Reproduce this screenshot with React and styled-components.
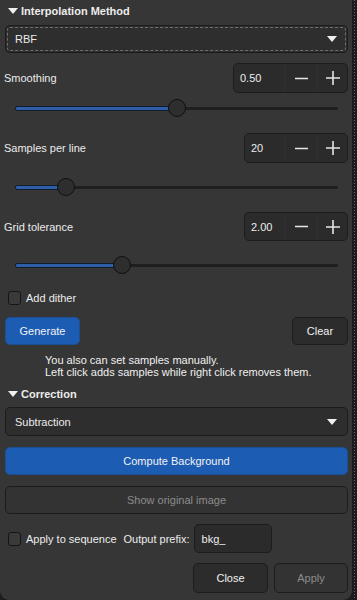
import styled, { createGlobalStyle } from "styled-components";

const Global = createGlobalStyle`
  html, body {
    margin: 0;
    padding: 0;
    background: #1c1c1c;
  }
  body {
    font-family: "Liberation Sans", Arial, sans-serif;
    font-size: 11px;
    color: #ececec;
  }
`;

const Page = styled.div`
  display: flex;
  width: 357px;
  height: 600px;
  overflow: hidden;
`;

const Panel = styled.div`
  width: 352px;
  height: 600px;
  box-sizing: border-box;
  padding: 3px 4px 0 5px;
  background: #363636;
  border-radius: 0 0 9px 9px;
  display: flex;
  flex-direction: column;
`;

/* dotted strip on the right edge */
const Edge = styled.div`
  width: 5px;
  height: 600px;
  background: repeating-linear-gradient(
    to bottom,
    #6a6a6a 0px,
    #6a6a6a 1px,
    #1c1c1c 1px,
    #1c1c1c 3px
  );
  background-size: 1px 100%;
  background-repeat: no-repeat;
  background-position: 2px 0;
`;

const Header = styled.div`
  display: flex;
  align-items: center;
  gap: 3px;
  height: 16px;
  padding-left: 3px;
  margin-top: ${(p) => p.$mt || 0}px;
  font-weight: bold;
  font-size: 11px;
`;

const Caret = styled.span`
  width: 0;
  height: 0;
  border-left: 5px solid transparent;
  border-right: 5px solid transparent;
  border-top: 6px solid #f0f0f0;
`;

const Combo = styled.div`
  display: flex;
  align-items: center;
  justify-content: space-between;
  height: ${(p) => p.$h || 28}px;
  margin-top: ${(p) => p.$mt || 0}px;
  box-sizing: border-box;
  padding: 0 10px 0 9px;
  background: #2e2e2e;
  border: 1px solid #1b1b1b;
  border-radius: 5px;
  outline: ${(p) => (p.$focus ? "1px dashed #6e6e6e" : "none")};
  outline-offset: -3px;
`;

const Row = styled.div`
  display: flex;
  align-items: center;
  justify-content: ${(p) => p.$justify || "space-between"};
  gap: ${(p) => p.$gap || 0}px;
  margin-top: ${(p) => p.$mt || 0}px;
  height: ${(p) => p.$h || 30}px;
`;

const Label = styled.span`
  margin-left: ${(p) => p.$ml ?? -1}px;
  color: #ececec;
`;

const Spin = styled.div`
  display: flex;
  height: 100%;
  box-sizing: border-box;
  background: #2b2b2b;
  border: 1px solid #1c1c1c;
  border-radius: 5px;
  overflow: hidden;
`;

const SpinEntry = styled.div`
  width: ${(p) => p.$w}px;
  display: flex;
  align-items: center;
  padding-left: 6px;
  box-sizing: border-box;
`;

const SpinBtn = styled.div`
  width: ${(p) => p.$w || 31}px;
  box-sizing: border-box;
  display: flex;
  align-items: center;
  justify-content: center;
  border-left: 1px solid #303030;
`;

const SliderWrap = styled.div`
  position: relative;
  height: 20px;
  margin: ${(p) => p.$mt}px 10px 0 10px;
`;

const Track = styled.div`
  position: absolute;
  left: 0;
  right: 0;
  top: 9px;
  height: 3px;
  border-radius: 2px;
  background: #1f1f1f;
`;

const Fill = styled.div`
  position: absolute;
  left: 0;
  top: 8px;
  height: 5px;
  box-sizing: border-box;
  border-radius: 2px;
  background: #2f5ea8;
  border: 1px solid #121c2c;
`;

const Knob = styled.div`
  position: absolute;
  top: 1px;
  width: 18px;
  height: 18px;
  margin-left: -9px;
  box-sizing: border-box;
  border-radius: 50%;
  background: #2e2e2e;
  border: 1px solid #0f0f0f;
`;

const CheckRow = styled.label`
  display: flex;
  align-items: center;
  gap: 5px;
  padding-left: 3px;
  margin-top: ${(p) => p.$mt || 0}px;
  height: ${(p) => p.$h || 16}px;
`;

const Box = styled.span`
  width: 13px;
  height: 14px;
  box-sizing: border-box;
  border: 1px solid #151515;
  border-radius: 3px;
  background: #3a3a3a;
`;

const Button = styled.div`
  display: flex;
  align-items: center;
  justify-content: center;
  box-sizing: border-box;
  width: ${(p) => (p.$w ? `${p.$w}px` : "auto")};
  height: ${(p) => p.$h || 28}px;
  margin-top: ${(p) => p.$mt || 0}px;
  border-radius: 5px;
  border: 1px solid ${(p) => (p.$blue ? "#1a4f96" : "#1c1c1c")};
  background: ${(p) => (p.$blue ? "#1c5cb3" : p.$off ? "#333333" : "#2c2c2c")};
  color: ${(p) => (p.$off ? "#8c8c8c" : "#f2f2f2")};
`;

const Help = styled.div`
  margin-top: 9px;
  padding-left: 40px;
  line-height: 12px;
  color: #f0f0f0;
`;

const Entry = styled.div`
  width: 78px;
  height: 100%;
  box-sizing: border-box;
  display: flex;
  align-items: center;
  padding-left: 7px;
  background: #2b2b2b;
  border: 1px solid #1c1c1c;
  border-radius: 5px;
`;

const Group = styled.div`
  display: flex;
  align-items: center;
  gap: ${(p) => p.$gap || 0}px;
  height: 100%;
`;

function Minus() {
  return (
    <svg width="13" height="13" viewBox="0 0 13 13">
      <path d="M0 6.5h13" stroke="#e6e6e6" strokeWidth="1.6" />
    </svg>
  );
}

function Plus() {
  return (
    <svg width="14" height="14" viewBox="0 0 14 14">
      <path d="M0 7h14M7 0v14" stroke="#e6e6e6" strokeWidth="1.6" />
    </svg>
  );
}

function SpinBox({ value, entry }) {
  return (
    <Spin>
      <SpinEntry $w={entry}>{value}</SpinEntry>
      <SpinBtn $w={33}>
        <Minus />
      </SpinBtn>
      <SpinBtn $w={30}>
        <Plus />
      </SpinBtn>
    </Spin>
  );
}

function Slider({ pos, mt }) {
  return (
    <SliderWrap $mt={mt}>
      <Track />
      <Fill style={{ width: pos }} />
      <Knob style={{ left: pos }} />
    </SliderWrap>
  );
}

export default function App() {
  return (
    <Page>
      <Global />
      <Panel>
        <Header>
          <Caret />
          Interpolation Method
        </Header>
        <Combo $mt={6} $focus>
          <span>RBF</span>
          <Caret />
        </Combo>

        <Row $mt={10}>
          <Label>Smoothing</Label>
          <SpinBox value="0.50" entry={50} />
        </Row>
        <Slider pos={162} mt={5} />

        <Row $mt={15}>
          <Label>Samples per line</Label>
          <SpinBox value="20" entry={39} />
        </Row>
        <Slider pos={51} mt={14} />

        <Row $mt={15} $h={29}>
          <Label>Grid tolerance</Label>
          <SpinBox value="2.00" entry={39} />
        </Row>
        <Slider pos={107} mt={14} />

        <CheckRow $mt={15}>
          <Box />
          Add dither
        </CheckRow>

        <Row $mt={11} $h={28}>
          <Button $blue $w={75}>
            Generate
          </Button>
          <Button $w={56}>Clear</Button>
        </Row>

        <Help>
          You also can set samples manually.
          <br />
          Left click adds samples while right click removes them.
        </Help>

        <Header $mt={8}>
          <Caret />
          Correction
        </Header>
        <Combo $mt={5} $h={29}>
          <span>Subtraction</span>
          <Caret />
        </Combo>

        <Button $blue $mt={11}>
          Compute Background
        </Button>
        <Button $off $mt={11}>
          Show original image
        </Button>

        <Row $mt={10} $h={29} $justify="flex-start" $gap={4}>
          <Group>
            <CheckRow>
              <Box />
              Apply to sequence
            </CheckRow>
            <Label $ml={7}>Output prefix:</Label>
          </Group>
          <Entry>bkg_</Entry>
        </Row>

        <Row $mt={10} $h={30} $justify="flex-end" $gap={6}>
          <Button $w={75} $h={30}>
            Close
          </Button>
          <Button $off $w={74} $h={30}>
            Apply
          </Button>
        </Row>
      </Panel>
      <Edge />
    </Page>
  );
}
